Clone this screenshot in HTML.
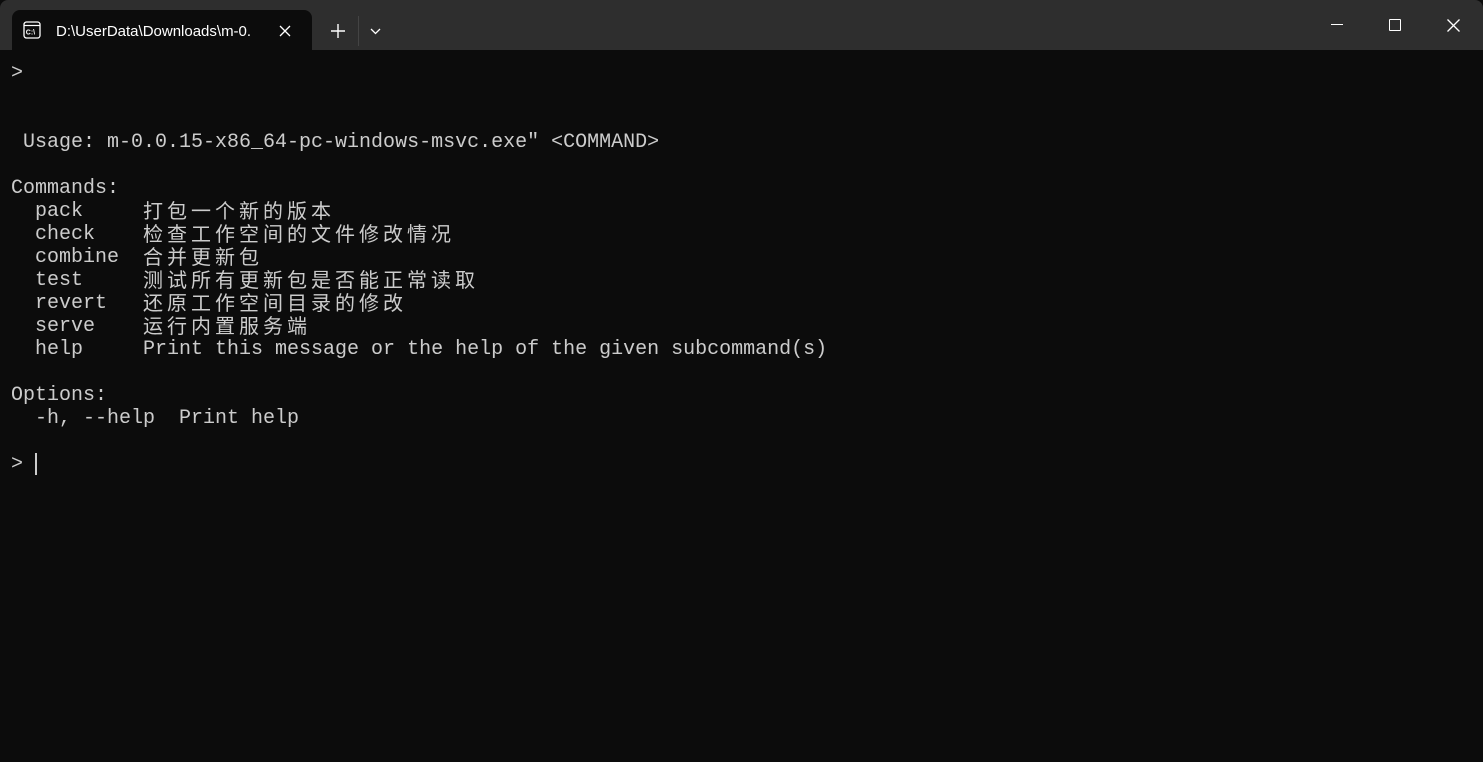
<!DOCTYPE html>
<html><head><meta charset="utf-8"><style>
html,body{margin:0;padding:0;width:1483px;height:762px;overflow:hidden;background:#0c0c0c}
.bar{position:absolute;left:0;top:0;width:1483px;height:50px;background:#2e2e2e;border-radius:8px 8px 0 0}
.tab{position:absolute;left:12px;top:10px;width:300px;height:40px;background:#0c0c0c;border-radius:8px 8px 0 0}
.tt{position:absolute;left:44px;top:13px;font:15px "Liberation Sans",sans-serif;color:#fff;white-space:nowrap}
.term{position:absolute;left:11px;top:62px;font:20px/23px "Liberation Mono",monospace;color:#cccccc}
.term div{height:23px;white-space:pre;overflow:visible}
.c{font-family:"Noto Sans CJK SC",sans-serif;letter-spacing:4px;font-size:20px;line-height:23px;display:inline-block;height:23px;vertical-align:top;position:relative;top:-2px}
.cur{display:inline-block;width:2px;height:22px;background:#ccc;vertical-align:top}
</style></head><body>
<div class="bar"></div>
<div class="tab">
<svg style="position:absolute;left:11px;top:11px" width="18" height="18" viewBox="0 0 18 18"><rect x="1" y="1" width="16" height="16" rx="2.5" fill="none" stroke="#fff" stroke-width="1.3"/><line x1="1" y1="4.5" x2="17" y2="4.5" stroke="#fff" stroke-width="1.2"/><text x="2.8" y="13.5" font-family="Liberation Sans" font-size="7" font-weight="bold" fill="#fff">C:\</text></svg>
<div class="tt">D:\UserData\Downloads\m-0.</div>
<svg style="position:absolute;left:267px;top:15px" width="12" height="12"><path d="M1 1L11 11M11 1L1 11" stroke="#fff" stroke-width="1.3"/></svg>
</div>
<svg style="position:absolute;left:331px;top:24px" width="14" height="14"><path d="M7 0V14M0 7H14" stroke="#fff" stroke-width="1.4"/></svg>
<div style="position:absolute;left:358px;top:16px;width:1px;height:30px;background:#444"></div>
<svg style="position:absolute;left:370px;top:28px" width="11" height="7"><path d="M1 1L5.5 5.5L10 1" stroke="#fff" stroke-width="1.3" fill="none"/></svg>
<div style="position:absolute;left:1331px;top:24px;width:12px;height:1px;background:#fff"></div>
<div style="position:absolute;left:1389px;top:19px;width:10px;height:10px;border:1.3px solid #fff;border-radius:1px"></div>
<svg style="position:absolute;left:1447px;top:19px" width="13" height="13"><path d="M0.5 0.5L12.5 12.5M12.5 0.5L0.5 12.5" stroke="#fff" stroke-width="1.3"/></svg>
<div class="term">
<div>&gt;</div>
<div></div>
<div></div>
<div> Usage: m-0.0.15-x86_64-pc-windows-msvc.exe" &lt;COMMAND&gt;</div>
<div></div>
<div>Commands:</div>
<div>  pack     <span class="c">打包一个新的版本</span></div>
<div>  check    <span class="c">检查工作空间的文件修改情况</span></div>
<div>  combine  <span class="c">合并更新包</span></div>
<div>  test     <span class="c">测试所有更新包是否能正常读取</span></div>
<div>  revert   <span class="c">还原工作空间目录的修改</span></div>
<div>  serve    <span class="c">运行内置服务端</span></div>
<div>  help     Print this message or the help of the given subcommand(s)</div>
<div></div>
<div>Options:</div>
<div>  -h, --help  Print help</div>
<div></div>
<div>&gt; <span class="cur"></span></div>
</div>
</body></html>
